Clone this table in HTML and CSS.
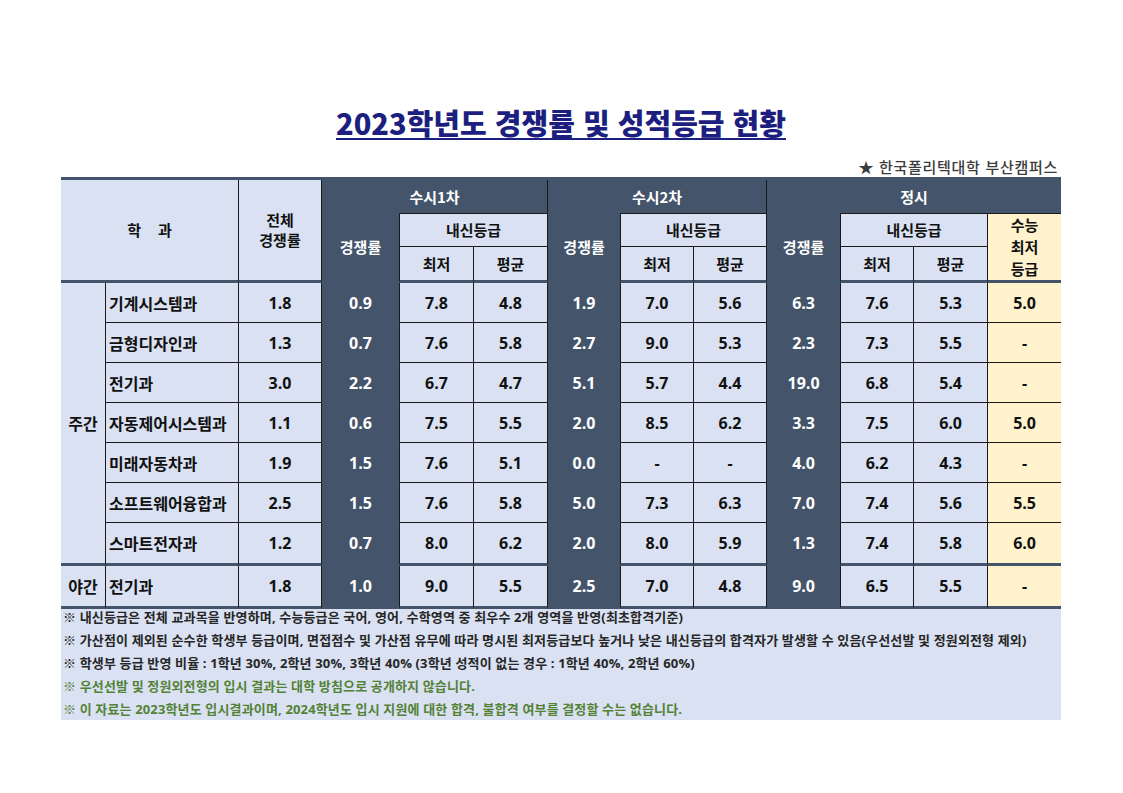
FILE: index.html
```html
<!DOCTYPE html>
<html lang="ko">
<head>
<meta charset="utf-8">
<title>2023학년도 경쟁률 및 성적등급 현황</title>
<link rel="stylesheet" href="styles.css">
</head>
<body>
<div class="page">
  <h1 class="title">2023학년도 경쟁률 및 성적등급 현황</h1>
  <div class="campus">★ 한국폴리텍대학 부산캠퍼스</div>
  <table class="grid">
    <colgroup>
      <col style="width:45px"><col style="width:133px"><col style="width:83px">
      <col style="width:78px"><col style="width:74px"><col style="width:74px">
      <col style="width:73px"><col style="width:73px"><col style="width:73px">
      <col style="width:74px"><col style="width:73px"><col style="width:74px">
      <col style="width:73px">
    </colgroup>
    <thead>
      <tr class="h1">
        <th class="lt hb" rowspan="3" colspan="2">학&nbsp;&nbsp;&nbsp;&nbsp;과</th>
        <th class="lt hb" rowspan="3">전체<br>경쟁률</th>
        <th class="dk top" colspan="3">수시1차</th>
        <th class="dk top" colspan="3">수시2차</th>
        <th class="dk top last" colspan="4">정시</th>
      </tr>
      <tr class="h2">
        <th class="dk hb" rowspan="2">경쟁률</th>
        <th class="lt tl" colspan="2">내신등급</th>
        <th class="dk hb" rowspan="2">경쟁률</th>
        <th class="lt tl" colspan="2">내신등급</th>
        <th class="dk hb" rowspan="2">경쟁률</th>
        <th class="lt tl" colspan="2">내신등급</th>
        <th class="yl hb tl last multi" rowspan="2">수능<br>최저<br>등급</th>
      </tr>
      <tr class="h3">
        <th class="lt hb">최저</th><th class="lt hb">평균</th>
        <th class="lt hb">최저</th><th class="lt hb">평균</th>
        <th class="lt hb">최저</th><th class="lt hb">평균</th>
      </tr>
    </thead>
    <tbody>
      <tr class="row">
        <td class="lt grp gb" rowspan="7">주간</td>
        <td class="lt dept">기계시스템과</td><td class="lt">1.8</td>
        <td class="dk">0.9</td><td class="lt">7.8</td><td class="lt">4.8</td>
        <td class="dk">1.9</td><td class="lt">7.0</td><td class="lt">5.6</td>
        <td class="dk">6.3</td><td class="lt">7.6</td><td class="lt">5.3</td><td class="yl last">5.0</td>
      </tr>
      <tr class="row">
        <td class="lt dept">금형디자인과</td><td class="lt">1.3</td>
        <td class="dk">0.7</td><td class="lt">7.6</td><td class="lt">5.8</td>
        <td class="dk">2.7</td><td class="lt">9.0</td><td class="lt">5.3</td>
        <td class="dk">2.3</td><td class="lt">7.3</td><td class="lt">5.5</td><td class="yl last">-</td>
      </tr>
      <tr class="row">
        <td class="lt dept">전기과</td><td class="lt">3.0</td>
        <td class="dk">2.2</td><td class="lt">6.7</td><td class="lt">4.7</td>
        <td class="dk">5.1</td><td class="lt">5.7</td><td class="lt">4.4</td>
        <td class="dk">19.0</td><td class="lt">6.8</td><td class="lt">5.4</td><td class="yl last">-</td>
      </tr>
      <tr class="row">
        <td class="lt dept">자동제어시스템과</td><td class="lt">1.1</td>
        <td class="dk">0.6</td><td class="lt">7.5</td><td class="lt">5.5</td>
        <td class="dk">2.0</td><td class="lt">8.5</td><td class="lt">6.2</td>
        <td class="dk">3.3</td><td class="lt">7.5</td><td class="lt">6.0</td><td class="yl last">5.0</td>
      </tr>
      <tr class="row">
        <td class="lt dept">미래자동차과</td><td class="lt">1.9</td>
        <td class="dk">1.5</td><td class="lt">7.6</td><td class="lt">5.1</td>
        <td class="dk">0.0</td><td class="lt">-</td><td class="lt">-</td>
        <td class="dk">4.0</td><td class="lt">6.2</td><td class="lt">4.3</td><td class="yl last">-</td>
      </tr>
      <tr class="row">
        <td class="lt dept">소프트웨어융합과</td><td class="lt">2.5</td>
        <td class="dk">1.5</td><td class="lt">7.6</td><td class="lt">5.8</td>
        <td class="dk">5.0</td><td class="lt">7.3</td><td class="lt">6.3</td>
        <td class="dk">7.0</td><td class="lt">7.4</td><td class="lt">5.6</td><td class="yl last">5.5</td>
      </tr>
      <tr class="row rowend">
        <td class="lt dept gb">스마트전자과</td><td class="lt gb">1.2</td>
        <td class="dk gb">0.7</td><td class="lt gb">8.0</td><td class="lt gb">6.2</td>
        <td class="dk gb">2.0</td><td class="lt gb">8.0</td><td class="lt gb">5.9</td>
        <td class="dk gb">1.3</td><td class="lt gb">7.4</td><td class="lt gb">5.8</td><td class="yl last gb">6.0</td>
      </tr>
      <tr class="row rowend">
        <td class="lt grp gb">야간</td>
        <td class="lt dept gb">전기과</td><td class="lt gb">1.8</td>
        <td class="dk gb">1.0</td><td class="lt gb">9.0</td><td class="lt gb">5.5</td>
        <td class="dk gb">2.5</td><td class="lt gb">7.0</td><td class="lt gb">4.8</td>
        <td class="dk gb">9.0</td><td class="lt gb">6.5</td><td class="lt gb">5.5</td><td class="yl last gb">-</td>
      </tr>
    </tbody>
  </table>
  <div class="notes">
    <div class="notes-inner">
      <p>※ 내신등급은 전체 교과목을 반영하며, 수능등급은 국어, 영어, 수학영역 중 최우수 2개 영역을 반영(최초합격기준)</p>
      <p>※ 가산점이 제외된 순수한 학생부 등급이며, 면접점수 및 가산점 유무에 따라 명시된 최저등급보다 높거나 낮은 내신등급의 합격자가 발생할 수 있음(우선선발 및 정원외전형 제외)</p>
      <p>※ 학생부 등급 반영 비율 : 1학년 30%, 2학년 30%, 3학년 40% (3학년 성적이 없는 경우 : 1학년 40%, 2학년 60%)</p>
      <p class="green">※ 우선선발 및 정원외전형의 입시 결과는 대학 방침으로 공개하지 않습니다.</p>
      <p class="green">※ 이 자료는 2023학년도 입시결과이며, 2024학년도 입시 지원에 대한 합격, 불합격 여부를 결정할 수는 없습니다.</p>
    </div>
  </div>
</div>
</body>
</html>
```

FILE: styles.css
```css
html, body {
  margin: 0;
  padding: 0;
  background: #ffffff;
}

body {
  font-family: "Open Sans", "Noto Sans CJK KR", sans-serif;
  color: #111111;
}

.page {
  width: 1000px;
  margin-left: 61px;
  padding-top: 104px;
}

.title {
  margin: 0;
  height: 36px;
  line-height: 36px;
  text-align: center;
  font-family: "Noto Sans CJK KR", sans-serif;
  font-size: 29px;
  font-weight: 900;
  color: #1d1f80;
  text-decoration: underline;
  text-decoration-thickness: 2px;
  text-underline-offset: 3px;
  letter-spacing: 0;
}

.campus {
  margin-top: 17px;
  height: 20px;
  line-height: 20px;
  padding-right: 3px;
  text-align: right;
  font-family: "Noto Sans CJK KR", sans-serif;
  font-size: 15px;
  font-weight: 500;
  letter-spacing: 0.7px;
  color: #3c3c3c;
}

.grid {
  width: 1000px;
  table-layout: fixed;
  border-collapse: separate;
  border-spacing: 0;
  border-top: 3px solid #44546a;
  font-size: 16px;
  font-weight: 700;
}

.grid th,
.grid td {
  padding: 0;
  text-align: center;
  vertical-align: middle;
  border-right: 1px solid #1a1a1a;
  border-bottom: 1px solid #1a1a1a;
  line-height: 20px;
}

.grid th {
  font-family: "Noto Sans CJK KR", sans-serif;
  font-size: 15px;
  font-weight: 700;
}

.h1 { height: 33px; }
.h2 { height: 34px; }
.h3 { height: 36px; }
.row { height: 40px; }
.rowend { height: 43px; }

.lt { background: #d9e1f2; color: #111111; }
.dk { background: #44546a; color: #ffffff; }
.yl { background: #fff2cc; color: #111111; }

.grid .dk { border-bottom-color: #44546a; }
.grid .top { border-bottom: 0; color: #ffffff; }
.grid .tl { border-top: 1px solid #1a1a1a; }
.grid .last { border-right: 0; }
.grid .hb { border-bottom: 3px solid #44546a; }
.grid .gb { border-bottom: 3px solid #44546a; }

.grid .multi { line-height: 22px; }

.grid .dept {
  text-align: left;
  padding-left: 3px;
  font-family: "Noto Sans CJK KR", sans-serif;
  font-size: 16px;
}

.grid .grp {
  font-family: "Noto Sans CJK KR", sans-serif;
  font-size: 16px;
}

.notes {
  height: 111px;
  background: #d9e1f2;
}

.notes-inner {
  position: relative;
  top: -3px;
  padding-left: 2px;
}

.notes p {
  margin: 0;
  height: 23px;
  line-height: 23px;
  font-size: 13px;
  font-weight: 700;
  letter-spacing: 0.15px;
  color: #262626;
  white-space: nowrap;
}

.notes p.green {
  color: #548235;
}
```
